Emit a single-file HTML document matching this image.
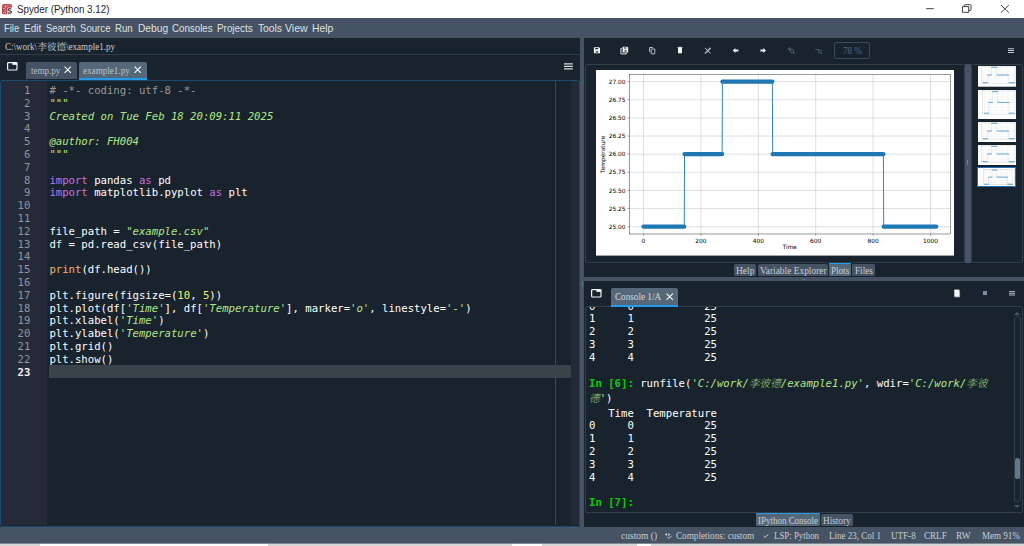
<!DOCTYPE html>
<html lang="zh-Hant">
<head>
<meta charset="utf-8">
<title>Spyder (Python 3.12)</title>
<style>
*{box-sizing:border-box;margin:0;padding:0}
html,body{width:1024px;height:546px;overflow:hidden;background:#19232d}
body{position:relative;font-family:"Liberation Serif", "Noto Serif CJK SC", serif;color:#dfe1e2}
.abs,.ln,.cl,.co,.plot,.thumb,.t{position:absolute}
.t{white-space:pre;color:#c9cdd1;line-height:12px;transform-origin:0 0}
.serif{font-family:"Liberation Serif", "Noto Serif CJK SC", serif}
.sans{font-family:"Liberation Sans", "Noto Sans CJK TC", sans-serif}
#title{left:0;top:0;width:1024px;height:18px;background:#fff}
#menubar{left:0;top:18px;width:1024px;height:19.8px;background:#455364}
.hline{height:1px;background:#303c48}
.tab{height:17.2px;top:62.1px;background:#455364;border-radius:2px 2px 0 0}
.tab.sel{background:#54687a;border-bottom:2px solid #259ae9}
/* editor */
#editor{left:0;top:80.2px;width:580px;height:446.6px;border:1.1px solid #1a4a70;border-radius:2px;background:#19232d}
#gutter{left:1.4px;top:81.4px;width:46.1px;height:443.6px;background:#242a37}
#flags{left:571.2px;top:81.4px;width:7.4px;height:443.6px;background:#232936}
#edge{left:555.2px;top:81.4px;width:0.8px;height:443.6px;background:#43484e}
#curline{left:49.4px;top:365.2px;width:521.8px;height:12.8px;background:#3a424a}
.ln{left:0;width:30.4px;text-align:right;font:10.632px/12.8px "DejaVu Sans Mono", "Liberation Mono", "Noto Sans CJK TC", monospace;color:#8f959b;white-space:pre}
.ln.cur{color:#f0f0f0;font-weight:bold}
.cl{left:49.4px;font:10.632px/12.8px "DejaVu Sans Mono", "Liberation Mono", "Noto Sans CJK TC", monospace;color:#fff;white-space:pre}
.c{color:#999}
.s{color:#b0e686;font-style:italic}
.k{color:#c670e0}
.b{color:#fab16c}
.n{color:#faed5c}
.split{background:#455364}
.frame{border:1px solid #313d49;border-radius:2px}
.co{left:589.0px;font:10.632px/12.8px "DejaVu Sans Mono", "Liberation Mono", "Noto Sans CJK TC", monospace;color:#fff;white-space:pre}
.pi{color:#00d000;font-weight:bold}
.cj{font-weight:300;opacity:.85}
.ptab{background:#455364;border-radius:1.5px}
.ptab.sel{background:#54687a;border-top:1.7px solid #259ae9;border-radius:0 0 1.5px 1.5px}
#status{left:0;top:526.9px;width:1024px;height:16.6px;background:#455364}
#strip{left:0;top:543.4px;width:1024px;height:2.6px;background:#d6d6d6;border-top:1px solid #7e8893}
.w{top:543px;height:3px;background:#fbfbfb;border-top:1px solid #828c97}
svg.ic{position:absolute;overflow:visible}
</style>
</head>
<body>
<div id="title" class="abs"></div>
<svg class="ic" style="left:2.3px;top:3.9px" width="10" height="10.2" viewBox="0 0 10 10.2"><rect x="0" y="0" width="10" height="10.2" rx="1.6" fill="#c24548"/><path d="M5.4 3.6H10V10.2H5.4z" fill="#fff"/><path d="M1.2 1.4l1.2 1.2M3.4 1l.4 1.6M5.4.9l1 1.2M7.6 1.2l1 .9M1 4.2l1.6.6M2.6 6.8l1.2-1.6M1.2 8.6l1.4-.8M3.4 9.2l.4-1.4M3 3.6l1.6-1.4" stroke="#f3d3d3" stroke-width=".8" fill="none"/><path d="M9.3 5.1C8.2 4.4 6.3 4.5 6.3 5.7c0 1.4 3.1.8 3.1 2.3 0 1.3-2.2 1.4-3.4.6" fill="none" stroke="#4a4a4a" stroke-width="1.3"/></svg>
<svg class="ic" style="left:920px;top:0" width="104" height="18" viewBox="0 0 104 18"><path d="M6.2 8.65h7.6" stroke="#222" stroke-width=".85"/><path d="M42.4 6.6h6.3v5.7h-6.3zM44.3 6.6V5.5q0-.8.8-.8h5.1q.8 0 .8.8v4.1q0 .8-.8.8h-1.5" fill="none" stroke="#222" stroke-width=".85"/><path d="M80.9 5l8 7.7M88.9 5l-8 7.7" stroke="#222" stroke-width=".85"/></svg>
<div id="menubar" class="abs"></div>
<div class="abs hline" style="left:0;top:54px;width:580.2px"></div>
<svg class="ic" style="left:6.6px;top:62.3px" width="10.6" height="8.6" viewBox="0 0 10.6 8.6"><rect x=".6" y=".6" width="9.4" height="7.4" rx=".9" fill="none" stroke="#f4f4f4" stroke-width="1.2"/><path d="M5.4.4h4.8v2.5H5.4z" fill="#f4f4f4"/></svg>
<div class="abs tab" style="left:26px;width:51.2px"></div>
<div class="abs tab sel" style="left:79px;width:68px;height:17.8px"></div>
<svg class="ic" style="left:64.2px;top:66.1px" width="7.4" height="7.4" viewBox="0 0 8 8"><path d="M.6.6l6.8 6.8M7.4.6L.6 7.4" stroke="#fff" stroke-width="1.15"/></svg>
<svg class="ic" style="left:133.5px;top:66.1px" width="7.4" height="7.4" viewBox="0 0 8 8"><path d="M.6.6l6.8 6.8M7.4.6L.6 7.4" stroke="#fff" stroke-width="1.15"/></svg>
<svg class="ic" style="left:564.4px;top:63.4px" width="8.8" height="6.8" viewBox="0 0 9 7" preserveAspectRatio="none"><path d="M0 .9h9M0 3.5h9M0 6.1h9" stroke="#d6d9dc" stroke-width="1.35"/></svg>
<div id="editor" class="abs"></div>
<div id="gutter" class="abs"></div>
<div id="flags" class="abs"></div>
<div id="edge" class="abs"></div>
<div id="curline" class="abs"></div>
<div class="ln" style="top:84.95px">1</div>
<div class="cl" style="top:84.95px"><span class="c"># -*- coding: utf-8 -*-</span></div>
<div class="ln" style="top:97.75px">2</div>
<div class="cl" style="top:97.75px"><span class="s">"""</span></div>
<div class="ln" style="top:110.55px">3</div>
<div class="cl" style="top:110.55px"><span class="s">Created on Tue Feb 18 20:09:11 2025</span></div>
<div class="ln" style="top:123.35px">4</div>
<div class="ln" style="top:136.15px">5</div>
<div class="cl" style="top:136.15px"><span class="s">@author: FH004</span></div>
<div class="ln" style="top:148.95px">6</div>
<div class="cl" style="top:148.95px"><span class="s">"""</span></div>
<div class="ln" style="top:161.75px">7</div>
<div class="ln" style="top:174.55px">8</div>
<div class="cl" style="top:174.55px"><span class="k">import</span> pandas <span class="k">as</span> pd</div>
<div class="ln" style="top:187.35px">9</div>
<div class="cl" style="top:187.35px"><span class="k">import</span> matplotlib.pyplot <span class="k">as</span> plt</div>
<div class="ln" style="top:200.15px">10</div>
<div class="ln" style="top:212.95px">11</div>
<div class="ln" style="top:225.75px">12</div>
<div class="cl" style="top:225.75px">file_path = <span class="s">"example.csv"</span></div>
<div class="ln" style="top:238.55px">13</div>
<div class="cl" style="top:238.55px">df = pd.read_csv(file_path)</div>
<div class="ln" style="top:251.35px">14</div>
<div class="ln" style="top:264.15px">15</div>
<div class="cl" style="top:264.15px"><span class="b">print</span>(df.head())</div>
<div class="ln" style="top:276.95px">16</div>
<div class="ln" style="top:289.75px">17</div>
<div class="cl" style="top:289.75px">plt.figure(figsize=(<span class="n">10</span>, <span class="n">5</span>))</div>
<div class="ln" style="top:302.55px">18</div>
<div class="cl" style="top:302.55px">plt.plot(df[<span class="s">'Time'</span>], df[<span class="s">'Temperature'</span>], marker=<span class="s">'o'</span>, linestyle=<span class="s">'-'</span>)</div>
<div class="ln" style="top:315.35px">19</div>
<div class="cl" style="top:315.35px">plt.xlabel(<span class="s">'Time'</span>)</div>
<div class="ln" style="top:328.15px">20</div>
<div class="cl" style="top:328.15px">plt.ylabel(<span class="s">'Temperature'</span>)</div>
<div class="ln" style="top:340.95px">21</div>
<div class="cl" style="top:340.95px">plt.grid()</div>
<div class="ln" style="top:353.75px">22</div>
<div class="cl" style="top:353.75px">plt.show()</div>
<div class="ln cur" style="top:366.55px">23</div>
<div class="abs split" style="left:580.2px;top:37.8px;width:3.9px;height:489.1px"></div>
<svg class="ic" style="left:588px;top:42px" width="240" height="18" viewBox="0 0 240 18">
<g fill="#f1f2f3">
<path d="M5.9 5.3h5.2l.9.9v5.1H5.9zM7.3 5.9v1.4h2.8V5.9zM7.8 9.3v1.2h2.4V9.3z" fill-rule="evenodd"/>
<path d="M34.6 4.8h4.8l.8.8v4.9h-5.6zM36.0 5.4v1.2h2.6V5.4zM36.4 8.3v1.2h2.2V8.3z" fill-rule="evenodd"/>
<path d="M33.9 6.4h-1.0v5.5h5.6v-1.0" fill="none" stroke="#f1f2f3" stroke-width=".9"/>
<path d="M90 6.0h4.0v5.3H90zM89.5 5.2h5.0v.7h-5.0zM91.2 4.8h1.6v.5h-1.6z"/>
<path d="M144.8 8.5l2.6-2.4v1.5h3.0v1.9h-3.0v1.5z"/>
<path d="M178.0 8.5l-2.6-2.4v1.5h-3.0v1.9h3.0v1.5z"/>
</g>
<g fill="none" stroke="#c6cacd" stroke-width=".9">
<path d="M61.6 10.2V5.5h3.4M63.2 7.0h3.6v4.8h-3.6z"/>
</g>
<g fill="none" stroke="#c9cdd0">
<path d="M117 5.9l5.6 5.6" stroke-width="1"/><path d="M122.6 5.9l-5.6 5.6" stroke-width="1.5" stroke="#aeb4ba"/>
</g>
<g fill="none" stroke="#52687b" stroke-width=".8">
<path d="M199.4 6.9h4.4M201.6 4.9v4.0"/><circle cx="204.0" cy="9.0" r="1.7"/><path d="M205.2 10.2l1.6 1.8" stroke-width="1"/>
<path d="M227.2 7.5h3.6"/><circle cx="231.8" cy="9.4" r="1.6"/><path d="M232.9 10.5l1.3 1.5" stroke-width="1"/>
</g>
</svg>
<div class="abs" style="left:834.4px;top:42.2px;width:36px;height:16.4px;border:1px solid #3b4957;border-radius:2px"></div>
<svg class="ic" style="left:1007.8px;top:47.9px" width="6.0" height="5.2" viewBox="0 0 9 7" preserveAspectRatio="none"><path d="M0 .9h9M0 3.5h9M0 6.1h9" stroke="#c3c7cb" stroke-width="1.35"/></svg>
<div class="abs frame" style="left:584.8px;top:63.6px;width:380px;height:199.4px"></div>
<div class="abs split" style="left:964.8px;top:63.6px;width:5.8px;height:199.4px"></div>
<div class="abs frame" style="left:971px;top:63.6px;width:52px;height:199.4px"></div>
<svg class="plot" style="left:596.1px;top:70.2px" width="358.2" height="185.6" viewBox="0 0 358.2 185.6">
<rect x="0" y="0" width="358.2" height="185.6" fill="#fff"/>
<path d="M47.50 4.70V164.00M104.90 4.70V164.00M162.30 4.70V164.00M219.70 4.70V164.00M277.10 4.70V164.00M334.50 4.70V164.00M33.20 156.70H354.40M33.20 138.57H354.40M33.20 120.45H354.40M33.20 102.32H354.40M33.20 84.20H354.40M33.20 66.07H354.40M33.20 47.95H354.40M33.20 29.82H354.40M33.20 11.70H354.40" stroke="#b0b0b0" stroke-width="0.4" fill="none"/>
<polyline points="47.50,156.70 88.25,156.70 88.54,84.20 126.14,84.20 126.42,11.70 176.36,11.70 176.65,84.20 287.43,84.20 287.72,156.70 340.24,156.70" fill="none" stroke="#1f77b4" stroke-width="0.9"/>
<path d="M47.50 156.70H88.25M88.54 84.20H126.14M126.42 11.70H176.36M176.65 84.20H287.43M287.72 156.70H340.24" stroke="#1f77b4" stroke-width="4.3" stroke-linecap="round" fill="none"/>
<rect x="33.20" y="4.70" width="321.20" height="159.30" fill="none" stroke="#000" stroke-width="0.4"/>
<path d="M47.50 164.0v1.6M104.90 164.0v1.6M162.30 164.0v1.6M219.70 164.0v1.6M277.10 164.0v1.6M334.50 164.0v1.6M33.2 156.70h-1.6M33.2 138.57h-1.6M33.2 120.45h-1.6M33.2 102.32h-1.6M33.2 84.20h-1.6M33.2 66.07h-1.6M33.2 47.95h-1.6M33.2 29.82h-1.6M33.2 11.70h-1.6" stroke="#000" stroke-width="0.4" fill="none"/>
<g font-family="&quot;DejaVu Sans&quot;, &quot;Liberation Sans&quot;, sans-serif" font-size="5.9" fill="#000">
<text x="47.50" y="172.60" text-anchor="middle">0</text>
<text x="104.90" y="172.60" text-anchor="middle">200</text>
<text x="162.30" y="172.60" text-anchor="middle">400</text>
<text x="219.70" y="172.60" text-anchor="middle">600</text>
<text x="277.10" y="172.60" text-anchor="middle">800</text>
<text x="334.50" y="172.60" text-anchor="middle">1000</text>
<text x="29.50" y="158.80" text-anchor="end">25.00</text>
<text x="29.50" y="140.67" text-anchor="end">25.25</text>
<text x="29.50" y="122.55" text-anchor="end">25.50</text>
<text x="29.50" y="104.42" text-anchor="end">25.75</text>
<text x="29.50" y="86.30" text-anchor="end">26.00</text>
<text x="29.50" y="68.17" text-anchor="end">26.25</text>
<text x="29.50" y="50.05" text-anchor="end">26.50</text>
<text x="29.50" y="31.92" text-anchor="end">26.75</text>
<text x="29.50" y="13.80" text-anchor="end">27.00</text>
<text x="193.80" y="179.40" text-anchor="middle">Time</text>
<text transform="translate(8.6 84.35) rotate(-90)" text-anchor="middle">Temperature</text>
</g>
</svg>
<svg class="thumb" style="left:977.6px;top:66.0px" width="38.4" height="20.7" viewBox="0 0 38.4 20.7">
<rect x="0" y="0" width="38.4" height="20.7" fill="#fff"/>
<path d="M5.09 0.53V17.47M11.25 0.53V17.47M17.40 0.53V17.47M23.55 0.53V17.47M29.71 0.53V17.47M35.86 0.53V17.47M3.56 16.70H37.99M3.56 14.77H37.99M3.56 12.85H37.99M3.56 10.92H37.99M3.56 9.00H37.99M3.56 7.07H37.99M3.56 5.15H37.99M3.56 3.22H37.99M3.56 1.30H37.99" stroke="#b0b0b0" stroke-width="0.1" fill="none"/>
<polyline points="5.09,16.70 9.46,16.70 9.49,9.00 13.52,9.00 13.55,1.30 18.91,1.30 18.94,9.00 30.81,9.00 30.84,16.70 36.47,16.70" fill="none" stroke="#1f77b4" stroke-width="0.1"/>
<path d="M5.09 16.70H9.46M9.49 9.00H13.52M13.55 1.30H18.91M18.94 9.00H30.81M30.84 16.70H36.47" stroke="#1f77b4" stroke-width="0.6" stroke-linecap="round" fill="none"/>
<rect x="3.56" y="0.53" width="34.43" height="16.94" fill="none" stroke="#000" stroke-width="0.08"/>
</svg>
<svg class="thumb" style="left:977.6px;top:89.6px" width="38.4" height="29.3" viewBox="0 0 38.4 29.3">
<rect x="0" y="0" width="38.4" height="29.3" fill="#fff"/>
<path d="M6.40 0.52V24.28M12.28 0.52V24.28M18.16 0.52V24.28M24.04 0.52V24.28M29.92 0.52V24.28M35.80 0.52V24.28M4.90 23.20H38.00M4.90 20.50H38.00M4.90 17.80H38.00M4.90 15.10H38.00M4.90 12.40H38.00M4.90 9.70H38.00M4.90 7.00H38.00M4.90 4.30H38.00M4.90 1.60H38.00" stroke="#b0b0b0" stroke-width="0.1" fill="none"/>
<polyline points="6.40,23.20 10.57,23.20 10.60,12.40 14.46,12.40 14.48,1.60 19.60,1.60 19.63,12.40 30.98,12.40 31.01,23.20 36.39,23.20" fill="none" stroke="#1f77b4" stroke-width="0.1"/>
<path d="M6.40 23.20H10.57M10.60 12.40H14.46M14.48 1.60H19.60M19.63 12.40H30.98M31.01 23.20H36.39" stroke="#1f77b4" stroke-width="0.6" stroke-linecap="round" fill="none"/>
<rect x="4.90" y="0.52" width="33.10" height="23.76" fill="none" stroke="#000" stroke-width="0.08"/>
</svg>
<svg class="thumb" style="left:977.6px;top:121.7px" width="38.4" height="20.4" viewBox="0 0 38.4 20.4">
<rect x="0" y="0" width="38.4" height="20.4" fill="#fff"/>
<path d="M5.09 0.53V17.47M11.25 0.53V17.47M17.40 0.53V17.47M23.55 0.53V17.47M29.71 0.53V17.47M35.86 0.53V17.47M3.56 16.70H37.99M3.56 14.77H37.99M3.56 12.85H37.99M3.56 10.92H37.99M3.56 9.00H37.99M3.56 7.07H37.99M3.56 5.15H37.99M3.56 3.22H37.99M3.56 1.30H37.99" stroke="#b0b0b0" stroke-width="0.1" fill="none"/>
<polyline points="5.09,16.70 9.46,16.70 9.49,9.00 13.52,9.00 13.55,1.30 18.91,1.30 18.94,9.00 30.81,9.00 30.84,16.70 36.47,16.70" fill="none" stroke="#1f77b4" stroke-width="0.1"/>
<path d="M5.09 16.70H9.46M9.49 9.00H13.52M13.55 1.30H18.91M18.94 9.00H30.81M30.84 16.70H36.47" stroke="#1f77b4" stroke-width="0.6" stroke-linecap="round" fill="none"/>
<rect x="3.56" y="0.53" width="34.43" height="16.94" fill="none" stroke="#000" stroke-width="0.08"/>
</svg>
<svg class="thumb" style="left:977.6px;top:145.0px" width="38.4" height="20.1" viewBox="0 0 38.4 20.1">
<rect x="0" y="0" width="38.4" height="20.1" fill="#fff"/>
<path d="M5.09 0.53V17.47M11.25 0.53V17.47M17.40 0.53V17.47M23.55 0.53V17.47M29.71 0.53V17.47M35.86 0.53V17.47M3.56 16.70H37.99M3.56 14.77H37.99M3.56 12.85H37.99M3.56 10.92H37.99M3.56 9.00H37.99M3.56 7.07H37.99M3.56 5.15H37.99M3.56 3.22H37.99M3.56 1.30H37.99" stroke="#b0b0b0" stroke-width="0.1" fill="none"/>
<polyline points="5.09,16.70 9.46,16.70 9.49,9.00 13.52,9.00 13.55,1.30 18.91,1.30 18.94,9.00 30.81,9.00 30.84,16.70 36.47,16.70" fill="none" stroke="#1f77b4" stroke-width="0.1"/>
<path d="M5.09 16.70H9.46M9.49 9.00H13.52M13.55 1.30H18.91M18.94 9.00H30.81M30.84 16.70H36.47" stroke="#1f77b4" stroke-width="0.6" stroke-linecap="round" fill="none"/>
<rect x="3.56" y="0.53" width="34.43" height="16.94" fill="none" stroke="#000" stroke-width="0.08"/>
</svg>
<svg class="thumb" style="left:977.6px;top:167.5px" width="38.4" height="19.3" viewBox="0 0 38.4 19.3">
<rect x="0" y="0" width="38.4" height="19.3" fill="#fff"/>
<path d="M6.60 1.29V16.91M12.10 1.29V16.91M17.60 1.29V16.91M23.10 1.29V16.91M28.60 1.29V16.91M34.10 1.29V16.91M5.20 16.20H36.80M5.20 14.42H36.80M5.20 12.65H36.80M5.20 10.88H36.80M5.20 9.10H36.80M5.20 7.32H36.80M5.20 5.55H36.80M5.20 3.78H36.80M5.20 2.00H36.80" stroke="#b0b0b0" stroke-width="0.1" fill="none"/>
<polyline points="6.60,16.20 10.50,16.20 10.53,9.10 14.13,9.10 14.16,2.00 18.95,2.00 18.98,9.10 29.59,9.10 29.62,16.20 34.65,16.20" fill="none" stroke="#1f77b4" stroke-width="0.1"/>
<path d="M6.60 16.20H10.50M10.53 9.10H14.13M14.16 2.00H18.95M18.98 9.10H29.59M29.62 16.20H34.65" stroke="#1f77b4" stroke-width="0.6" stroke-linecap="round" fill="none"/>
<rect x="5.20" y="1.29" width="31.60" height="15.62" fill="none" stroke="#000" stroke-width="0.08"/>
</svg>
<div class="abs" style="left:977.4px;top:167.4px;width:38.8px;height:19.5px;border:1.6px solid #1a72bb"></div>
<div class="abs ptab" style="left:734.3px;top:264.1px;width:21.8px;height:11.8px"></div>
<div class="abs ptab" style="left:757.6px;top:264.1px;width:70.2px;height:11.8px"></div>
<div class="abs ptab sel" style="left:829px;top:262.8px;width:22px;height:13.1px"></div>
<div class="abs ptab" style="left:852.4px;top:264.1px;width:22.4px;height:11.8px"></div>
<div class="abs split" style="left:584.1px;top:277.4px;width:439.9px;height:3.8px"></div>
<svg class="ic" style="left:591.2px;top:289.1px" width="10.6" height="8.6" viewBox="0 0 10.6 8.6"><rect x=".6" y=".6" width="9.4" height="7.4" rx=".9" fill="none" stroke="#f4f4f4" stroke-width="1.2"/><path d="M5.4.4h4.8v2.5H5.4z" fill="#f4f4f4"/></svg>
<div class="abs frame" style="left:584.8px;top:306.4px;width:437.8px;height:206.3px"></div>
<div class="abs tab sel" style="left:610.9px;top:288.3px;width:67.6px;height:18.5px"></div>
<svg class="ic" style="left:666px;top:292.7px" width="7.4" height="7.4" viewBox="0 0 8 8"><path d="M.6.6l6.8 6.8M7.4.6L.6 7.4" stroke="#fff" stroke-width="1.15"/></svg>
<svg class="ic" style="left:953px;top:288.9px" width="8" height="9.2" viewBox="0 0 8 10" preserveAspectRatio="none"><path d="M1.3 1.7h5.1v6.6H1.3zM.9.9h5.9v.8H.9zM2.8.5h2.1v.5H2.8z" fill="#f4f5f6"/><path d="M6.6 2.6v6.0H2.4" fill="none" stroke="#d0d3d6" stroke-width=".7"/></svg>
<div class="abs" style="left:982.5px;top:291.1px;width:4.1px;height:4px;background:#788ea3"></div>
<svg class="ic" style="left:1009.2px;top:290.8px" width="6.1" height="4.6" viewBox="0 0 9 7" preserveAspectRatio="none"><path d="M0 .9h9M0 3.5h9M0 6.1h9" stroke="#c3c7cb" stroke-width="1.35"/></svg>
<div class="abs" style="left:585.8px;top:307.4px;width:428px;height:204px;overflow:hidden"><div class="abs" style="left:-585.8px;top:-307.4px">
<div class="co" style="top:300.50px">0     0           25</div>
<div class="co" style="top:313.25px">1     1           25</div>
<div class="co" style="top:326.05px">2     2           25</div>
<div class="co" style="top:338.85px">3     3           25</div>
<div class="co" style="top:351.60px">4     4           25</div>
<div class="co" style="top:377.60px"><span class="pi">In [<b>6</b>]:</span> runfile(<span class="s">'C:/work/<span class="cj">李彼德</span>/example1.py'</span>, wdir=<span class="s">'C:/work/<span class="cj">李彼</span></span></div>
<div class="co" style="top:392.80px"><span class="s"><span class="cj">德</span>'</span>)</div>
<div class="co" style="top:408.00px">   Time  Temperature</div>
<div class="co" style="top:419.90px">0     0           25</div>
<div class="co" style="top:432.85px">1     1           25</div>
<div class="co" style="top:445.80px">2     2           25</div>
<div class="co" style="top:458.70px">3     3           25</div>
<div class="co" style="top:471.70px">4     4           25</div>
<div class="co" style="top:497.40px"><span class="pi">In [<b>7</b>]:</span></div>
</div></div>
<div class="abs" style="left:967.3px;top:160.4px;width:.9px;height:5px;background:#6f8296"></div>
<div class="abs" style="left:802.4px;top:278.8px;width:2.6px;height:.9px;background:#5f7286"></div>
<div class="abs" style="left:581.7px;top:280.6px;width:.9px;height:5px;background:#5d7084"></div>
<div class="abs" style="left:1014px;top:316px;width:6.6px;height:185.6px;border:1px solid #33404c;border-radius:3px"></div>
<div class="abs" style="left:1014.8px;top:457.8px;width:5px;height:21.4px;background:#60798b;border-radius:2.5px"></div>
<svg class="ic" style="left:1014.3px;top:311.6px" width="6" height="3" viewBox="0 0 6 3"><path d="M0 3L3 0l3 3z" fill="#4a5968"/></svg>
<svg class="ic" style="left:1014.3px;top:504.6px" width="6" height="3" viewBox="0 0 6 3"><path d="M0 0h6L3 3z" fill="#4a5968"/></svg>
<div class="abs ptab sel" style="left:756.3px;top:512.8px;width:63.9px;height:13px"></div>
<div class="abs ptab" style="left:821.4px;top:514.2px;width:31.6px;height:11.6px"></div>
<div id="status" class="abs"></div>
<svg class="ic" style="left:664px;top:532px" width="9" height="8" viewBox="0 0 9 8"><path d="M.9 2.4L2.9.9v3zM6.2 2.4L4.2.9v3z" fill="#d3d6d9"/><path d="M3.4 5.2l1.3 1.2L7.7 3.9" fill="none" stroke="#d3d6d9" stroke-width=".95"/></svg>
<svg class="ic" style="left:763.2px;top:534.4px" width="5.8" height="3.8" viewBox="0 0 5.8 3.8"><path d="M.4 2.0l1.5 1.3L5.4.4" fill="none" stroke="#dfe1e2" stroke-width=".85"/></svg>
<div id="strip" class="abs"></div>
<div class="abs w" style="left:39.6px;width:228.4px"></div>
<div class="abs w" style="left:512px;width:30px"></div>
<div class="abs w" style="left:637px;width:14px"></div>
<div class="t sans" style="left:16.55px;top:2.80px;font-size:10.7px;color:#262626;transform:scaleX(0.9148)">Spyder (Python 3.12)</div>
<div class="t sans" style="left:3.75px;top:22.80px;font-size:10.3px;color:#dfe1e2;transform:scaleX(0.9158)">File</div>
<div class="t sans" style="left:23.75px;top:22.80px;font-size:10.3px;color:#dfe1e2;transform:scaleX(0.9691)">Edit</div>
<div class="t sans" style="left:45.65px;top:22.80px;font-size:10.3px;color:#dfe1e2;transform:scaleX(0.9100)">Search</div>
<div class="t sans" style="left:80.25px;top:22.80px;font-size:10.3px;color:#dfe1e2;transform:scaleX(0.9345)">Source</div>
<div class="t sans" style="left:115.45px;top:22.80px;font-size:10.3px;color:#dfe1e2;transform:scaleX(0.9367)">Run</div>
<div class="t sans" style="left:137.85px;top:22.80px;font-size:10.3px;color:#dfe1e2;transform:scaleX(0.9917)">Debug</div>
<div class="t sans" style="left:172.05px;top:22.80px;font-size:10.3px;color:#dfe1e2;transform:scaleX(0.9455)">Consoles</div>
<div class="t sans" style="left:217.35px;top:22.80px;font-size:10.3px;color:#dfe1e2;transform:scaleX(0.9595)">Projects</div>
<div class="t sans" style="left:257.65px;top:22.80px;font-size:10.3px;color:#dfe1e2;transform:scaleX(0.9939)">Tools</div>
<div class="t sans" style="left:285.25px;top:22.80px;font-size:10.3px;color:#dfe1e2;transform:scaleX(1.0208)">View</div>
<div class="t sans" style="left:312.15px;top:22.80px;font-size:10.3px;color:#dfe1e2;transform:scaleX(1.0007)">Help</div>
<div class="t serif" style="left:5.05px;top:40.60px;font-size:10.2px;transform:scaleX(0.8796)">C:\work\</div>
<div class="t serif" style="left:37.4px;top:41.00px;font-size:9.5px">李彼德</div>
<div class="t serif" style="left:66.05px;top:40.60px;font-size:10.2px;transform:scaleX(0.8890)">\example1.py</div>
<div class="t serif" style="left:31.35px;top:65.30px;font-size:10.2px;color:#b9bec3;transform:scaleX(0.8870)">temp.py</div>
<div class="t serif" style="left:83.25px;top:65.30px;font-size:10.2px;color:#bcc1c6;transform:scaleX(0.8932)">example1.py</div>
<div class="t serif" style="left:615.35px;top:291.20px;font-size:10.2px;color:#d5d8db;transform:scaleX(0.8989)">Console 1/A</div>
<div class="t serif" style="left:842.75px;top:45.00px;font-size:10.2px;color:#586b7d;transform:scaleX(0.8801)">78 %</div>
<div class="t serif" style="left:736.45px;top:264.60px;font-size:10.2px;transform:scaleX(0.9280)">Help</div>
<div class="t serif" style="left:759.55px;top:264.60px;font-size:10.2px;transform:scaleX(0.9236)">Variable Explorer</div>
<div class="t serif" style="left:831.15px;top:264.60px;font-size:10.2px;transform:scaleX(0.8917)">Plots</div>
<div class="t serif" style="left:854.55px;top:264.60px;font-size:10.2px;transform:scaleX(0.9024)">Files</div>
<div class="t serif" style="left:758.35px;top:514.80px;font-size:10.2px;transform:scaleX(0.8801)">IPython Console</div>
<div class="t serif" style="left:823.35px;top:514.80px;font-size:10.2px;transform:scaleX(0.9052)">History</div>
<div class="t serif" style="left:620.95px;top:530.00px;font-size:10.2px;transform:scaleX(0.9328)">custom ()</div>
<div class="t serif" style="left:676.35px;top:530.00px;font-size:10.2px;transform:scaleX(0.8990)">Completions: custom</div>
<div class="t serif" style="left:774.25px;top:530.00px;font-size:10.2px;transform:scaleX(0.8695)">LSP: Python</div>
<div class="t serif" style="left:829.05px;top:530.00px;font-size:10.2px;transform:scaleX(0.8824)">Line 23, Col 1</div>
<div class="t serif" style="left:890.55px;top:530.00px;font-size:10.2px;transform:scaleX(0.8895)">UTF-8</div>
<div class="t serif" style="left:923.95px;top:530.00px;font-size:10.2px;transform:scaleX(0.8898)">CRLF</div>
<div class="t serif" style="left:955.55px;top:530.00px;font-size:10.2px;transform:scaleX(0.9264)">RW</div>
<div class="t serif" style="left:982.25px;top:530.00px;font-size:10.2px;transform:scaleX(0.8837)">Mem 91%</div>
</body>
</html>
